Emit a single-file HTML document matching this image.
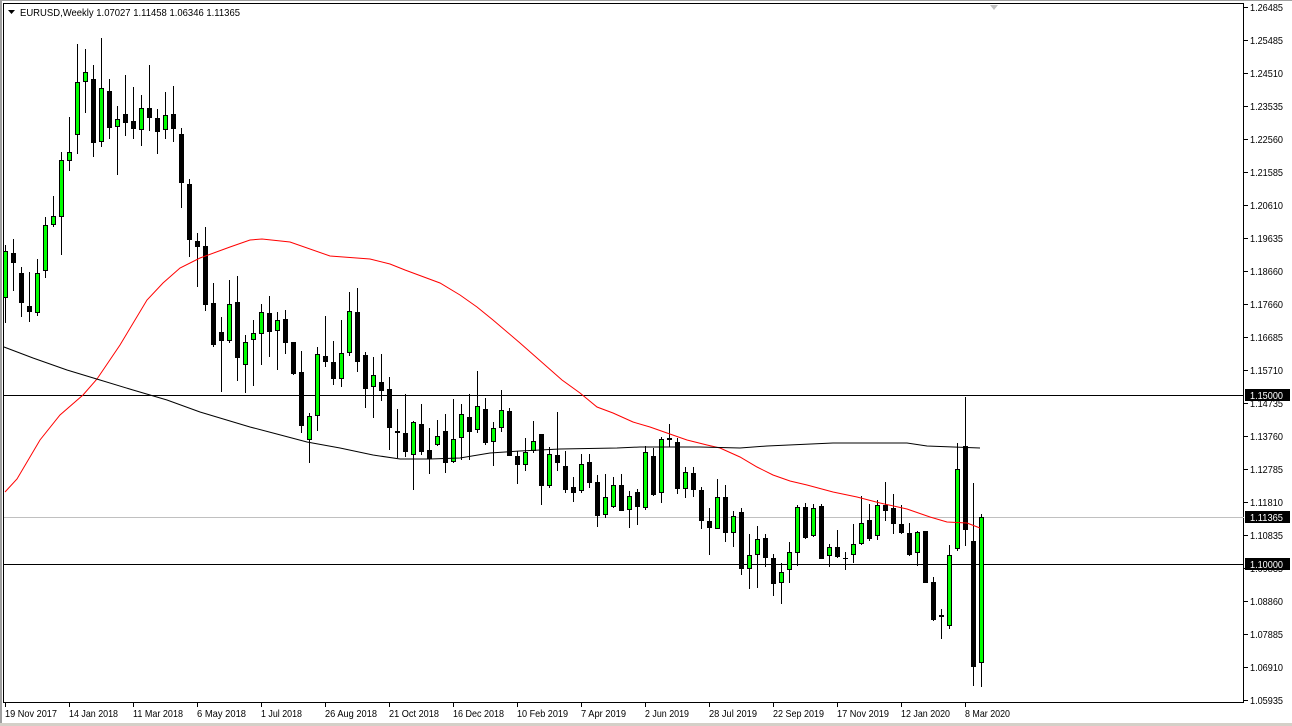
<!DOCTYPE html>
<html><head><meta charset="utf-8"><style>
html,body{margin:0;padding:0;background:#fff;}
body{width:1292px;height:726px;overflow:hidden;position:relative;font-family:"Liberation Sans",Tahoma,sans-serif;}
svg{position:absolute;left:0;top:0;}
.p text{font-size:10px;}
</style></head><body>
<svg width="1292" height="726" viewBox="0 0 1292 726" xmlns="http://www.w3.org/2000/svg" font-family="Liberation Sans, sans-serif" font-size="11">
<rect x="0" y="0" width="1292" height="726" fill="#fff"/>
<rect x="0" y="0" width="1292" height="1" fill="#a0a0a0"/>
<rect x="0" y="0" width="2" height="726" fill="#a0a0a0"/>
<rect x="0" y="723" width="1292" height="3" fill="#d4d0c8"/>
<rect x="3.5" y="3.5" width="1240" height="699" fill="none" stroke="#000"/>
<polygon points="990,5 998,5 994,10" fill="#c0c0c0"/>
<path d="M4 395.5H1244M4 564.5H1244" stroke="#000" fill="none"/>
<path d="M4 517.5H1244" stroke="#c0c0c0" fill="none"/>
<path stroke="#000" fill="none" d="M5.5 245V323M13.5 239V291M21.5 267V317M29.5 272V322M37.5 259V316M45.5 217V278M53.5 196V227M61.5 152V255M69.5 117V171M77.5 44V154M85.5 49V113M93.5 65V157M101.5 38V147M109.5 79V139M117.5 106V175M125.5 75V136M133.5 87V139M141.5 95V146M149.5 65V131M157.5 109V154M165.5 92V139M173.5 86V142M181.5 128V208M189.5 179V257M197.5 233V287M205.5 227V311M213.5 283V347M221.5 317V392M229.5 280V343M237.5 276V381M245.5 335V393M253.5 320V386M261.5 304V365M269.5 296V357M277.5 312V370M285.5 310V354M293.5 342V375M301.5 351V433M309.5 413V463M317.5 347V431M325.5 316V367M333.5 341V385M341.5 320V387M349.5 292V356M357.5 288V372M365.5 352V408M373.5 357V418M381.5 354V401M389.5 377V450M397.5 409V458M405.5 394V457M413.5 421V490M421.5 404V455M429.5 428V474M437.5 420V446M445.5 414V473M453.5 399V463M461.5 404V460M469.5 394V460M477.5 371V433M485.5 398V445M493.5 422V466M501.5 390V432M509.5 408V456M517.5 451V484M525.5 438V471M533.5 421V453M541.5 434V505M549.5 447V488M557.5 412V471M565.5 451V493M573.5 477V502M581.5 454V493M589.5 454V488M597.5 475V527M605.5 474V518M613.5 477V508M621.5 474V511M629.5 491V528M637.5 489V525M645.5 446V510M653.5 448V496M661.5 437V503M669.5 424V447M677.5 438V494M685.5 467V498M693.5 467V497M701.5 487V529M709.5 508V555M717.5 479V529M725.5 485V542M733.5 511V547M741.5 508V575M749.5 534V589M757.5 526V588M765.5 534V567M773.5 554V596M781.5 563V604M789.5 542V583M797.5 505V566M805.5 503V539M813.5 504V537M821.5 504V559M829.5 544V567M837.5 530V558M845.5 552V570M853.5 524V563M861.5 496V545M869.5 504V541M877.5 500V540M885.5 482V521M893.5 494V534M901.5 505V534M909.5 523V556M917.5 531V566M925.5 531V583M933.5 577V621M941.5 609V639M949.5 545V629M957.5 443V551M965.5 397V546M973.5 483V686M981.5 514V687"/>
<g fill="#000">
<rect x="11" y="253" width="5" height="10"/><rect x="19" y="273" width="5" height="30"/><rect x="27" y="306" width="5" height="6"/>
<rect x="91" y="79" width="5" height="64"/><rect x="107" y="91" width="5" height="37"/><rect x="123" y="114" width="5" height="9"/>
<rect x="131" y="121" width="5" height="8"/><rect x="147" y="108" width="5" height="10"/><rect x="155" y="118" width="5" height="14"/>
<rect x="171" y="114" width="5" height="15"/><rect x="179" y="134" width="5" height="49"/><rect x="187" y="184" width="5" height="56"/>
<rect x="195" y="241" width="5" height="6"/><rect x="203" y="246" width="5" height="59"/><rect x="211" y="303" width="5" height="42"/>
<rect x="219" y="332" width="5" height="9"/><rect x="235" y="302" width="5" height="56"/><rect x="267" y="313" width="5" height="19"/>
<rect x="283" y="319" width="5" height="24"/><rect x="291" y="342" width="5" height="32"/><rect x="299" y="372" width="5" height="54"/>
<rect x="323" y="356" width="5" height="6"/><rect x="331" y="362" width="5" height="17"/><rect x="355" y="312" width="5" height="50"/>
<rect x="363" y="355" width="5" height="34"/><rect x="379" y="382" width="5" height="9"/><rect x="387" y="389" width="5" height="39"/>
<rect x="395" y="431" width="5" height="2"/><rect x="403" y="433" width="5" height="19"/><rect x="419" y="424" width="5" height="28"/>
<rect x="427" y="450" width="5" height="9"/><rect x="443" y="431" width="5" height="32"/><rect x="467" y="417" width="5" height="15"/>
<rect x="483" y="409" width="5" height="34"/><rect x="507" y="411" width="5" height="45"/><rect x="515" y="456" width="5" height="9"/>
<rect x="539" y="434" width="5" height="52"/><rect x="555" y="455" width="5" height="8"/><rect x="563" y="466" width="5" height="24"/>
<rect x="571" y="487" width="5" height="6"/><rect x="587" y="462" width="5" height="21"/><rect x="595" y="482" width="5" height="34"/>
<rect x="619" y="485" width="5" height="26"/><rect x="635" y="492" width="5" height="15"/><rect x="651" y="456" width="5" height="39"/>
<rect x="667" y="438" width="5" height="2"/><rect x="675" y="442" width="5" height="47"/><rect x="691" y="473" width="5" height="17"/>
<rect x="699" y="490" width="5" height="31"/><rect x="707" y="521" width="5" height="7"/><rect x="723" y="497" width="5" height="36"/>
<rect x="739" y="512" width="5" height="57"/><rect x="763" y="538" width="5" height="20"/><rect x="771" y="558" width="5" height="26"/>
<rect x="803" y="507" width="5" height="31"/><rect x="819" y="506" width="5" height="53"/><rect x="835" y="547" width="5" height="10"/>
<rect x="843" y="558" width="5" height="1"/><rect x="867" y="520" width="5" height="19"/><rect x="883" y="505" width="5" height="6"/>
<rect x="891" y="508" width="5" height="16"/><rect x="899" y="524" width="5" height="9"/><rect x="907" y="533" width="5" height="22"/>
<rect x="923" y="531" width="5" height="52"/><rect x="931" y="582" width="5" height="38"/><rect x="963" y="446" width="5" height="84"/>
<rect x="971" y="541" width="5" height="126"/>
</g>
<g fill="#00ff00" stroke="#000">
<rect x="3.5" y="251.5" width="4" height="46"/><rect x="35.5" y="273.5" width="4" height="39"/><rect x="43.5" y="225.5" width="4" height="45"/>
<rect x="51.5" y="216.5" width="4" height="8"/><rect x="59.5" y="160.5" width="4" height="56"/><rect x="67.5" y="152.5" width="4" height="8"/>
<rect x="75.5" y="82.5" width="4" height="52"/><rect x="83.5" y="72.5" width="4" height="9"/><rect x="99.5" y="88.5" width="4" height="53"/>
<rect x="115.5" y="119.5" width="4" height="7"/><rect x="139.5" y="108.5" width="4" height="21"/><rect x="163.5" y="115.5" width="4" height="14"/>
<rect x="227.5" y="304.5" width="4" height="36"/><rect x="243.5" y="342.5" width="4" height="22"/><rect x="251.5" y="333.5" width="4" height="6"/>
<rect x="259.5" y="312.5" width="4" height="21"/><rect x="275.5" y="320.5" width="4" height="10"/><rect x="307.5" y="416.5" width="4" height="23"/>
<rect x="315.5" y="354.5" width="4" height="61"/><rect x="339.5" y="353.5" width="4" height="25"/><rect x="347.5" y="311.5" width="4" height="41"/>
<rect x="371.5" y="375.5" width="4" height="11"/><rect x="411.5" y="422.5" width="4" height="32"/><rect x="435.5" y="436.5" width="4" height="8"/>
<rect x="451.5" y="439.5" width="4" height="22"/><rect x="459.5" y="414.5" width="4" height="23"/><rect x="475.5" y="406.5" width="4" height="23"/>
<rect x="491.5" y="428.5" width="4" height="13"/><rect x="499.5" y="410.5" width="4" height="17"/><rect x="523.5" y="452.5" width="4" height="12"/>
<rect x="531.5" y="441.5" width="4" height="9"/><rect x="547.5" y="454.5" width="4" height="31"/><rect x="579.5" y="464.5" width="4" height="26"/>
<rect x="603.5" y="497.5" width="4" height="17"/><rect x="611.5" y="485.5" width="4" height="21"/><rect x="627.5" y="496.5" width="4" height="13"/>
<rect x="643.5" y="452.5" width="4" height="55"/><rect x="659.5" y="439.5" width="4" height="53"/><rect x="683.5" y="472.5" width="4" height="16"/>
<rect x="715.5" y="497.5" width="4" height="31"/><rect x="731.5" y="516.5" width="4" height="16"/><rect x="747.5" y="555.5" width="4" height="13"/>
<rect x="755.5" y="539.5" width="4" height="15"/><rect x="779.5" y="572.5" width="4" height="10"/><rect x="787.5" y="552.5" width="4" height="17"/>
<rect x="795.5" y="507.5" width="4" height="45"/><rect x="811.5" y="508.5" width="4" height="27"/><rect x="827.5" y="547.5" width="4" height="8"/>
<rect x="851.5" y="544.5" width="4" height="10"/><rect x="859.5" y="523.5" width="4" height="20"/><rect x="875.5" y="505.5" width="4" height="30"/>
<rect x="915.5" y="532.5" width="4" height="20"/><rect x="939.5" y="615.5" width="4" height="1"/><rect x="947.5" y="555.5" width="4" height="70"/>
<rect x="955.5" y="469.5" width="4" height="79"/><rect x="979.5" y="517.5" width="4" height="145"/>
</g>
<polyline fill="none" stroke="#ff0000" stroke-width="1" points="5,492 17,479 40,440 60,415 83,395 97,379 120,345 147,300 163,283 180,268 200,258 230,247 250,240 262,239 290,242 330,256 370,259 390,264 405,270 440,283 460,295 477,307 493,320 520,343 562,380 580,393 597,407 613,413 633,422 650,427 667,433 687,440 707,445 720,448 740,457 757,467 773,475 790,481 807,485 833,492 857,497 880,503 907,509 930,517 947,522 967,523 980,528"/>
<polyline fill="none" stroke="#000" stroke-width="1" points="4,347 33,358 67,370 100,380 133,390 167,400 200,412 250,427 273,433 307,442 340,448 373,455 400,459 430,459 460,458 490,453 520,451 560,449 617,448 640,447 700,447 740,448 767,446 833,443 907,443 927,446 980,448"/>
<path stroke="#000" d="M1244 7.5h4M1244 40.5h4M1244 73.5h4M1244 106.5h4M1244 139.5h4M1244 172.5h4M1244 205.5h4M1244 238.5h4M1244 271.5h4M1244 304.5h4M1244 337.5h4M1244 370.5h4M1244 403.5h4M1244 436.5h4M1244 469.5h4M1244 502.5h4M1244 535.5h4M1244 568.5h4M1244 601.5h4M1244 634.5h4M1244 667.5h4M1244 700.5h4"/>
<g fill="#000" font-size="10.5">
<text x="1250" y="11" textLength="33" lengthAdjust="spacingAndGlyphs">1.26485</text><text x="1250" y="44" textLength="33" lengthAdjust="spacingAndGlyphs">1.25485</text><text x="1250" y="77" textLength="33" lengthAdjust="spacingAndGlyphs">1.24510</text>
<text x="1250" y="110" textLength="33" lengthAdjust="spacingAndGlyphs">1.23535</text><text x="1250" y="143" textLength="33" lengthAdjust="spacingAndGlyphs">1.22560</text><text x="1250" y="176" textLength="33" lengthAdjust="spacingAndGlyphs">1.21585</text>
<text x="1250" y="209" textLength="33" lengthAdjust="spacingAndGlyphs">1.20610</text><text x="1250" y="242" textLength="33" lengthAdjust="spacingAndGlyphs">1.19635</text><text x="1250" y="275" textLength="33" lengthAdjust="spacingAndGlyphs">1.18660</text>
<text x="1250" y="308" textLength="33" lengthAdjust="spacingAndGlyphs">1.17660</text><text x="1250" y="341" textLength="33" lengthAdjust="spacingAndGlyphs">1.16685</text><text x="1250" y="374" textLength="33" lengthAdjust="spacingAndGlyphs">1.15710</text>
<text x="1250" y="407" textLength="33" lengthAdjust="spacingAndGlyphs">1.14735</text><text x="1250" y="440" textLength="33" lengthAdjust="spacingAndGlyphs">1.13760</text><text x="1250" y="473" textLength="33" lengthAdjust="spacingAndGlyphs">1.12785</text>
<text x="1250" y="506" textLength="33" lengthAdjust="spacingAndGlyphs">1.11810</text><text x="1250" y="539" textLength="33" lengthAdjust="spacingAndGlyphs">1.10835</text><text x="1250" y="572" textLength="33" lengthAdjust="spacingAndGlyphs">1.09835</text>
<text x="1250" y="605" textLength="33" lengthAdjust="spacingAndGlyphs">1.08860</text><text x="1250" y="638" textLength="33" lengthAdjust="spacingAndGlyphs">1.07885</text><text x="1250" y="671" textLength="33" lengthAdjust="spacingAndGlyphs">1.06910</text>
<text x="1250" y="704" textLength="33" lengthAdjust="spacingAndGlyphs">1.05935</text>
</g>
<g font-size="10.5">
<rect x="1245" y="389" width="45" height="12" fill="#000"/><text x="1250" y="399" fill="#fff" textLength="33" lengthAdjust="spacingAndGlyphs">1.15000</text>
<rect x="1245" y="511" width="45" height="12" fill="#000"/><text x="1250" y="521" fill="#fff" textLength="33" lengthAdjust="spacingAndGlyphs">1.11365</text>
<rect x="1245" y="558" width="45" height="12" fill="#000"/><text x="1250" y="568" fill="#fff" textLength="33" lengthAdjust="spacingAndGlyphs">1.10000</text>
</g>
<path stroke="#000" d="M5.5 703v4M69.5 703v4M133.5 703v4M197.5 703v4M261.5 703v4M325.5 703v4M389.5 703v4M453.5 703v4M517.5 703v4M581.5 703v4M645.5 703v4M709.5 703v4M773.5 703v4M837.5 703v4M901.5 703v4M965.5 703v4"/>
<g fill="#000" font-size="10.5">
<text x="5" y="717" textLength="52" lengthAdjust="spacingAndGlyphs">19 Nov 2017</text><text x="69" y="717" textLength="49" lengthAdjust="spacingAndGlyphs">14 Jan 2018</text><text x="133" y="717" textLength="50" lengthAdjust="spacingAndGlyphs">11 Mar 2018</text>
<text x="197" y="717" textLength="49" lengthAdjust="spacingAndGlyphs">6 May 2018</text><text x="261" y="717" textLength="41" lengthAdjust="spacingAndGlyphs">1 Jul 2018</text><text x="325" y="717" textLength="52" lengthAdjust="spacingAndGlyphs">26 Aug 2018</text>
<text x="389" y="717" textLength="50" lengthAdjust="spacingAndGlyphs">21 Oct 2018</text><text x="453" y="717" textLength="51" lengthAdjust="spacingAndGlyphs">16 Dec 2018</text><text x="517" y="717" textLength="51" lengthAdjust="spacingAndGlyphs">10 Feb 2019</text>
<text x="581" y="717" textLength="45" lengthAdjust="spacingAndGlyphs">7 Apr 2019</text><text x="645" y="717" textLength="44" lengthAdjust="spacingAndGlyphs">2 Jun 2019</text><text x="709" y="717" textLength="48" lengthAdjust="spacingAndGlyphs">28 Jul 2019</text>
<text x="773" y="717" textLength="51" lengthAdjust="spacingAndGlyphs">22 Sep 2019</text><text x="837" y="717" textLength="52" lengthAdjust="spacingAndGlyphs">17 Nov 2019</text><text x="901" y="717" textLength="49" lengthAdjust="spacingAndGlyphs">12 Jan 2020</text>
<text x="965" y="717" textLength="45" lengthAdjust="spacingAndGlyphs">8 Mar 2020</text>
</g>
<polygon points="8,10 15,10 11.5,14" fill="#000"/>
<text x="20" y="16" fill="#000" font-size="10.5" textLength="220" lengthAdjust="spacingAndGlyphs">EURUSD,Weekly  1.07027 1.11458 1.06346 1.11365</text>
</svg>
</body></html>
